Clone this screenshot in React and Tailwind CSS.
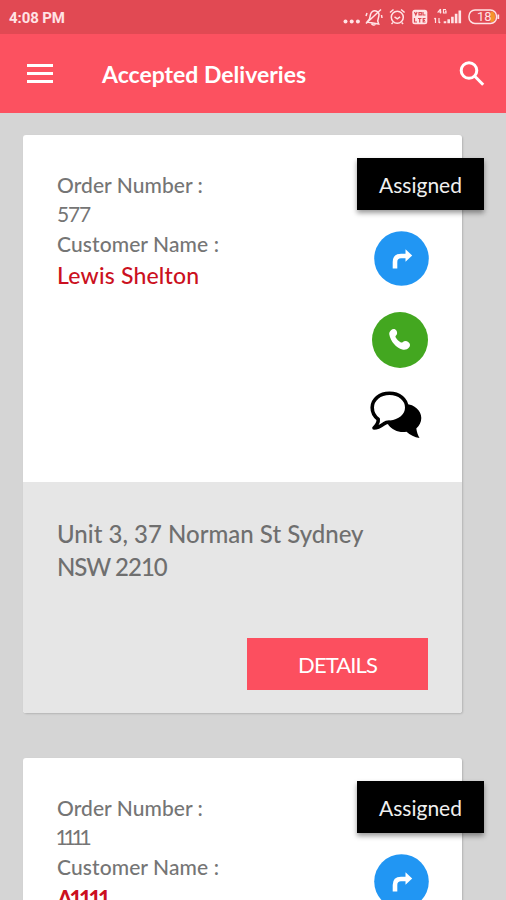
import React from 'react';

const deliveries = [
    {
        id: '577',
        customer: 'Lewis Shelton',
        street: 'Unit 3, 37 Norman St Sydney',
        region: 'NSW 2210',
        status: 'Assigned',
        idClass: 'tracking-[-1.200px]',
        nameClass: 'text-[23px] tracking-[0.200px] font-medium',
    },
    {
        id: '1111',
        customer: 'A1111',
        street: 'Unit 3, 37 Norman St Sydney',
        region: 'NSW 2210',
        status: 'Assigned',
        idClass: 'tracking-[-4.200px] -ml-[1.500px]',
        nameClass: 'text-[23px] font-bold tracking-[-3.800px]',
    },
];

function StatusIcons() {
    return (
        <svg width="158" height="20" viewBox="342 8 158 20" fill="none" stroke="#ffe3e5" strokeWidth="1.5">
            {/* More */}
            <g fill="#ffe3e5" stroke="none">
                <circle cx="345.500" cy="22.500" r="2" />
                <circle cx="351.700" cy="22.500" r="2" />
                <circle cx="357.900" cy="22.500" r="2" />
            </g>

            {/* Muted bell */}
            <path d="M367 23l2.500-3 1-4.500c.8-3 3-4.300 5.500-3.500s3.500 3 2.700 5.700l-1 4.300 1 3zM371.500 24.500c.5 1.500 3 2 3.700.6M366 24.500L381 10.500M367 14l-1 3M381.500 16l.5 3" />

            {/* Alarm */}
            <circle cx="397.300" cy="18.300" r="6" />
            <path d="M394.500 17.800l2.800 2 2.800-2M390 13.500l3.500-3M404.600 13.500l-3.500-3M393 23.500l-1.500 1.500M401.600 23.500l1.500 1.500" />

            {/* VoLTE */}
            <rect x="412.300" y="10.800" width="15" height="14.500" rx="2.500" fill="#ffe3e5" stroke="none" />
            <path stroke="#dd4852" strokeWidth="1.200" d="M414.500 13l1.300 3 1.300-3M419 13.500h2.300v2.300H419zM423 13v3h2.500M414.500 19v4h2.500M418 19.500h3.500M419.700 19.500v4M425.500 19.500h-2.300v3.500h2.300M423 21.300h2" />

            {/* Signal */}
            <path strokeWidth="1.200" d="M440.500 10l-2.300 3h3.300M440.500 10v4.500M446 10.500h-2.500V14h2.500v-1.800h-1M435.500 19v5M434.300 20.200l1.200-1.200M439 19v5M440.200 22.800L439 24" />
            <path strokeWidth="2.600" d="M445 24.300v-2M448.700 24.300v-4M452.400 24.300v-6.500M456.100 24.300v-9.500M459.800 24.300V11.500" />

            {/* Battery */}
            <rect x="469" y="10.900" width="27.500" height="13.500" rx="6" />
            <path fill="#f5952b" stroke="none" d="M490.500 12.500h2c3.500 1.500 3.500 9 0 10.500h-2z" />
            <path strokeWidth="1.800" d="M498.300 15.500v4.500" />
            <text x="477" y="22.300" fill="#ffe3e5" stroke="none" fontSize="13" fontFamily="Roboto, sans-serif">18</text>
        </svg>
    );
}

function TurnRightIcon() {
    return (
        <svg className="size-[55px]" viewBox="0 0 55 55">
            <circle cx="27.500" cy="27.500" r="27.300" fill="#2196f3" />
            <path d="M21 37.500V31q0-6 6-6h6" fill="none" stroke="#fff" strokeWidth="4.600" />
            <path d="M31.500 18.200l6.700 6.400-6.700 6.200z" fill="#fff" />
        </svg>
    );
}

function CallIcon() {
    return (
        <svg className="size-14" viewBox="0 0 56 56">
            <circle cx="28" cy="28" r="28" fill="#43a720" />
            <path
                d="M19 18.200c1.800-1.600 4.300-1.500 5.500.5 1 1.800.8 3.700-.7 5-.5.500-.4 1.200 0 1.900 1.200 2 2.700 3.500 4.700 4.700.8.400 1.500.4 2.100-.1 1.500-1.300 3.800-1.500 5.600-.3 2.200 1.400 2.400 3.800.8 5.700-1.700 2-4 2.700-6.700 2C24.500 36 18.500 29.500 17.300 22.500c-.3-1.700.4-3.200 1.700-4.300z"
                fill="#fff"
            />
        </svg>
    );
}

function ChatIcon() {
    return (
        <svg className="h-12 w-[52px]" viewBox="0 0 52 48">
            <path d="M36 13c8.500.5 15.300 6.500 15.300 14 0 4.500-2 7.500-5 10.500.5 3.500 1.500 6.500 3.200 9.500-5-.7-9.500-3-13-6.200-8 1-14-1.500-18.500-7.300z" />
            <path
                d="M19.500 2.200C29.300 2.200 36.800 8.300 36.800 16.500S29.500 30.500 20 31.200c-3-.2-4.300.3-6 1.600C10.500 35.300 7.500 37 4 37c3-3 4.500-6 4.200-8.800C4.500 25.500 2.200 21 2.200 16.500 2.200 8.300 9.700 2.200 19.500 2.200z"
                fill="#fff"
                stroke="#000"
                strokeWidth="3.600"
                strokeLinejoin="round"
            />
        </svg>
    );
}

function DeliveryCard({ delivery }) {
    return (
        <article className="relative h-[578px] w-[439px] shrink-0 rounded-[3px] bg-white shadow-[1px_1px_2px_rgba(0,0,0,0.16)]">
            <div className="flex h-[347px] justify-between pl-[34px]">
                <div className="pt-[35px] text-[#757575]">
                    <p className="h-[29px] text-[21px] leading-[30px] font-medium tracking-[0.05px] whitespace-nowrap">Order Number :</p>
                    <p className={'h-[30px] text-[21px] leading-[29px] ' + delivery.idClass}>{delivery.id}</p>
                    <p className="h-[30px] text-[21px] leading-[30px] font-medium tracking-[0.1px] whitespace-nowrap">Customer Name :</p>
                    <p className={'h-[33px] leading-[33px] whitespace-nowrap text-[#cb1020] ' + delivery.nameClass}>
                        {delivery.customer}
                    </p>
                </div>

                {/* Actions */}
                <div className="flex w-[112px] flex-col items-start pt-[96px]">
                    <button className="ml-[24px]"><TurnRightIcon /></button>
                    <button className="mt-[26px] ml-[21.500px]"><CallIcon /></button>
                    <button className="mt-[23px] ml-[20px]"><ChatIcon /></button>
                </div>
            </div>

            {/* Status badge hangs over the card edge */}
            <span className="absolute top-[23px] -right-[22px] flex h-[52px] w-[127px] items-center justify-center bg-black pt-[2px] text-[21px] text-[#f0f0f0] shadow-[0_3px_5px_rgba(0,0,0,0.4)]">
                {delivery.status}
            </span>

            <div className="h-[231px] rounded-b-[3px] bg-[#e6e6e6] pt-[35px] pr-[34px] pl-[34px]">
                <div className="h-[121px] text-[24px] leading-[33px] font-medium whitespace-nowrap text-[#6f6f6f]">
                    <p className="tracking-[0.02px]">{delivery.street}</p>
                    <p className="tracking-[-1px]">{delivery.region}</p>
                </div>
                <button className="ml-auto flex h-[52px] w-[181px] items-center justify-center bg-[#fc4f5f] pt-[1px] text-[22px] tracking-[-0.900px] text-white">
                    DETAILS
                </button>
            </div>
        </article>
    );
}

export default function App() {
    return (
        <div className="h-[900px] w-[506px] overflow-hidden bg-[#d5d5d5] font-['Lato',sans-serif]">
            <div className="flex h-[34px] items-center justify-between bg-[#e14953] pr-[6px] pl-[9px]">
                <span className="pt-[2px] font-['Roboto',sans-serif] text-[15px] font-bold tracking-[-0.1px] text-[#ffe3e5]">4:08 PM</span>
                <StatusIcons />
            </div>

            <header className="flex h-[79px] items-center bg-[#fc5160] text-white">
                <button className="ml-[27px] flex flex-col gap-[5px]">
                    <span className="h-[3px] w-[26px] bg-white" />
                    <span className="h-[3px] w-[26px] bg-white" />
                    <span className="h-[3px] w-[26px] bg-white" />
                </button>
                <h1 className="ml-[49px] pt-[2px] text-[23px] font-bold whitespace-nowrap">Accepted Deliveries</h1>
                <svg className="mr-[21px] ml-auto size-[26px]" viewBox="0 0 26 26" fill="none" stroke="#fff" strokeWidth="3">
                    <circle cx="10" cy="9.500" r="7.800" />
                    <path d="M15.500 15l8.700 8.700" />
                </svg>
            </header>

            <main className="flex flex-col gap-[45px] pt-[22px] pl-[23px]">
                {deliveries.map((delivery) => (
                    <DeliveryCard key={delivery.id} delivery={delivery} />
                ))}
            </main>
        </div>
    );
}
